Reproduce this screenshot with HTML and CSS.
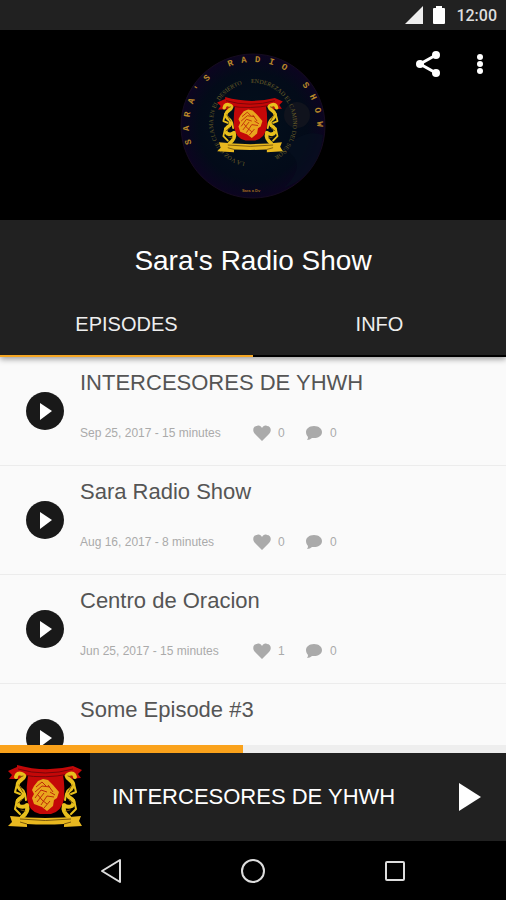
FILE: index.html
```html
<!DOCTYPE html>
<html lang="en">
<head>
    <meta charset="UTF-8">
    <meta name="viewport" content="width=device-width, initial-scale=1.0">
    <title>Sara's Radio Show</title>
    <link rel="stylesheet" href="styles.css">
</head>
<body>

    <!-- Shared icons -->
    <svg class="sprite" aria-hidden="true">
        <symbol id="crest" viewBox="0 0 90 80">
            <path fill="#c40808" d="M17 10 L8 14 L12 18 L9 22 L22 22 L28 18 Q26 30 27 42 Q29 55 40 57 L51 57 Q62 54 64 42 Q65 29 63 18 L69 22 L81 21 L78 17 L82 13 L73 9 Q45 16 17 8 Z"/>
            <path fill="none" stroke="#760508" stroke-width="1" d="M18 12 Q45 20 73 12 M22 18 Q45 22 69 17"/>
            <g id="dragon" fill="none" stroke="#e8c01c" stroke-width="4" stroke-linecap="round" stroke-linejoin="round">
                <path d="M16 20 Q17 15 22 17 Q27 19 21 23 Q15 27 20 32 Q26 36 22 40 Q15 44 19 49 Q24 51 27 48 Q29 55 22 60"/>
                <path stroke-width="2" d="M17 27 L15 35 L20 37 M17 43 L15 52 L20 57 M25 37 L26 43"/>
                <path stroke="#79570b" stroke-width="1" d="M20 20 L23 19 M19 28 L23 35 M18 46 L22 43 M21 53 L25 54"/>
            </g>
            <use href="#dragon" transform="matrix(-1 0 0 1 91 0)"/>
            <path fill="#e9a51d" d="M34 29 L38 24 L43 22 L48 23 L53 28 L59 35 L57 41 L54 43 L53 49 L47 54 L42 50 L34 47 L32 41 L34 37 L32 33 Z"/>
            <path fill="none" stroke="#bd2a09" stroke-width="1" d="M36 30 L42 25 L46 29 M35 35 L42 29 L50 30 M35 41 L41 33 L47 35 M37 45 L44 36 M41 48 L47 39 L54 40 M48 28 L53 35 M44 51 L50 44 M38 38 L42 43 L47 47 M50 35 L55 38"/>
            <path fill="#e8b820" d="M10 59 Q45 63 81 59 L79 64 L82 69 L64 70 L64 67 Q45 68 27 67 L27 70 L8 69 L12 65 Z"/>
            <path fill="none" stroke="#79570b" stroke-width="1" d="M20 62 Q45 65 71 62 M27 67 L20 65 M64 67 L71 65"/>
        </symbol>
        <symbol id="play" viewBox="0 0 38 38">
            <circle cx="19" cy="19" r="19" fill="#191919"/>
            <path fill="#fff" d="M14 11 L26 19 L14 28 Z"/>
        </symbol>
        <symbol id="heart" viewBox="0 0 18 16">
            <path fill="#aaa" d="M9 16 L2 9 C-1 6 0 1 4 1 C6 0 8 1 9 3 C10 1 12 0 14 1 C18 1 19 6 16 9 Z"/>
        </symbol>
        <symbol id="comment" viewBox="0 0 18 16">
            <path fill="#aaa" d="M9 1 C14 1 17 4 17 7 C17 11 13 13 9 13 L7 13 Q5 15 2 15 Q3 14 3 12 C2 11 1 9 1 7 C1 4 4 1 9 1 Z"/>
        </symbol>
    </svg>

    <div class="status-bar">
        <svg width="20" height="20" viewBox="0 0 20 20"><path fill="#eee" d="M19 1 V19 H1 Z"/></svg>
        <svg width="12" height="20" viewBox="0 0 12 20"><path fill="#fff" d="M3 1 H9 V3 H11 Q12 3 12 4 V18 Q12 19 11 19 H1 Q0 19 0 18 V4 Q0 3 1 3 H3 Z"/></svg>
        <span class="clock">12:00</span>
    </div>

    <header class="banner">
        <svg class="logo" viewBox="0 0 146 146" role="img" aria-label="Show logo">
            <defs>
                <radialGradient id="disc">
                    <stop offset="0" stop-color="#03101c"/>
                    <stop offset="0.75" stop-color="#030b19"/>
                    <stop offset="1" stop-color="#0c0420"/>
                </radialGradient>
                <path id="outer-ring" d="M73 137 A64 64 0 0 1 73 9 A64 64 0 0 1 73 137"/>
                <path id="inner-ring" d="M73 110 A40 40 0 0 1 73 30 A40 40 0 0 1 73 110"/>
            </defs>
            <circle cx="73" cy="73" r="72" fill="url(#disc)" stroke="#160c20" stroke-width="1"/>
            <circle cx="117" cy="62" r="13" fill="#10131d"/>
            <path fill="#071120" opacity="0.6" d="M104 96 Q124 75 143 82 Q139 122 104 135 Q130 110 104 96 Z"/>
            <text class="ring-title"><textPath href="#outer-ring" startOffset="82"><tspan dx="0 8 8 8 8 8 8 8 8 8 8 8 8 8 8 8 8">SARA'S RADIO SHOW</tspan></textPath></text>
            <text class="ring-motto"><textPath href="#inner-ring" startOffset="8">LA VOZ QUE CLAMA EN EL DESIERTO<tspan dx="9">ENDEREZAD EL CAMINO DEL SEÑOR</tspan></textPath></text>
            <use href="#crest" x="30" y="37" width="80" height="71"/>
            <text class="logo-note" x="71" y="139">Sara a Dv</text>
        </svg>
        <div class="actions">
            <button class="icon-button" type="button" aria-label="Share">
                <svg width="26" height="28" viewBox="0 0 26 28">
                    <path fill="none" stroke="#fff" stroke-width="3" d="M21 5 L5 14 L21 23"/>
                    <circle cx="21" cy="5" r="4" fill="#fff"/>
                    <circle cx="5" cy="14" r="4" fill="#fff"/>
                    <circle cx="21" cy="23" r="4" fill="#fff"/>
                </svg>
            </button>
            <button class="icon-button" type="button" aria-label="More options">
                <svg width="8" height="22" viewBox="0 0 8 22">
                    <g fill="#fff"><circle cx="4" cy="4" r="3"/><circle cx="4" cy="11" r="3"/><circle cx="4" cy="18" r="3"/></g>
                </svg>
            </button>
        </div>
    </header>

    <div class="show-header">
        <h1>Sara's Radio Show</h1>
        <nav class="tabs">
            <button class="tab active" type="button">EPISODES</button>
            <button class="tab" type="button">INFO</button>
        </nav>
    </div>

    <main class="episodes">
        <article class="episode">
            <button class="play-button" type="button" aria-label="Play"><svg width="38" height="38"><use href="#play"/></svg></button>
            <div class="details">
                <h2>INTERCESORES DE YHWH</h2>
                <div class="meta">
                    <span class="date">Sep 25, 2017 - 15 minutes</span>
                    <span class="count"><svg width="18" height="16"><use href="#heart"/></svg>0</span>
                    <span class="count"><svg width="18" height="16"><use href="#comment"/></svg>0</span>
                </div>
            </div>
        </article>
        <article class="episode">
            <button class="play-button" type="button" aria-label="Play"><svg width="38" height="38"><use href="#play"/></svg></button>
            <div class="details">
                <h2>Sara Radio Show</h2>
                <div class="meta">
                    <span class="date">Aug 16, 2017 - 8 minutes</span>
                    <span class="count"><svg width="18" height="16"><use href="#heart"/></svg>0</span>
                    <span class="count"><svg width="18" height="16"><use href="#comment"/></svg>0</span>
                </div>
            </div>
        </article>
        <article class="episode">
            <button class="play-button" type="button" aria-label="Play"><svg width="38" height="38"><use href="#play"/></svg></button>
            <div class="details">
                <h2>Centro de Oracion</h2>
                <div class="meta">
                    <span class="date">Jun 25, 2017 - 15 minutes</span>
                    <span class="count"><svg width="18" height="16"><use href="#heart"/></svg>1</span>
                    <span class="count"><svg width="18" height="16"><use href="#comment"/></svg>0</span>
                </div>
            </div>
        </article>
        <article class="episode">
            <button class="play-button" type="button" aria-label="Play"><svg width="38" height="38"><use href="#play"/></svg></button>
            <div class="details">
                <h2>Some Episode #3</h2>
            </div>
        </article>
    </main>

    <!-- Now playing -->
    <div class="progress"><div class="progress-fill" style="width: 48%"></div></div>
    <footer class="player">
        <div class="cover"><svg width="90" height="80"><use href="#crest"/></svg></div>
        <span class="track">INTERCESORES DE YHWH</span>
        <button class="icon-button" type="button" aria-label="Play">
            <svg width="24" height="28" viewBox="0 0 24 28"><path fill="#fff" d="M1 0 L23 14 L1 28 Z"/></svg>
        </button>
    </footer>

    <nav class="system-nav">
        <button class="icon-button" type="button" aria-label="Back">
            <svg width="24" height="26" viewBox="0 0 24 26"><path fill="none" stroke="#ddd" stroke-width="2" stroke-linejoin="round" d="M21 2 V24 L3 13 Z"/></svg>
        </button>
        <button class="icon-button" type="button" aria-label="Home">
            <svg width="24" height="26" viewBox="0 0 24 26"><circle cx="12" cy="13" r="11" fill="none" stroke="#ddd" stroke-width="2"/></svg>
        </button>
        <button class="icon-button" type="button" aria-label="Recent apps">
            <svg width="24" height="26" viewBox="0 0 24 26"><rect x="3" y="4" width="18" height="18" rx="1" fill="none" stroke="#ddd" stroke-width="2"/></svg>
        </button>
    </nav>

</body>
</html>
```
FILE: styles.css
```css
* {
    box-sizing: border-box;
}

body {
    margin: 0;
    height: 100vh;
    display: flex;
    flex-direction: column;
    overflow: hidden;
    background-color: #000;
    color: #fff;
    font-family: "Liberation Sans", Arial, sans-serif;
}

h1, h2 {
    margin: 0;
    font-weight: normal;
}

button {
    padding: 0;
    border: none;
    background: none;
    color: inherit;
    font-family: inherit;
    cursor: pointer;
}

svg {
    display: block;
    flex-shrink: 0;
}

.sprite {
    position: absolute;
    width: 0;
    height: 0;
}

.icon-button {
    display: flex;
    align-items: center;
    justify-content: center;
}

/* Status bar */
.status-bar {
    display: flex;
    align-items: center;
    justify-content: flex-end;
    gap: 9px;
    height: 30px;
    flex-shrink: 0;
    padding-right: 9px;
    background-color: #212121;
}

.clock {
    margin-left: 2px;
    font-family: Roboto, sans-serif;
    font-size: 16px;
    font-weight: 500;
    color: #ddd;
}

/* Banner with the show logo */
.banner {
    position: relative;
    display: flex;
    justify-content: center;
    padding: 23px 0 21px;
    flex-shrink: 0;
}

.logo {
    width: 146px;
    height: 146px;
}

.ring-title {
    fill: #b8862a;
    font: bold 9px "Liberation Mono", monospace;
}

.ring-motto {
    fill: #6f6228;
    font: 6px "Liberation Serif", serif;
}

.logo-note {
    fill: #a06a20;
    font: bold 4px "Liberation Sans", sans-serif;
    text-anchor: middle;
}

.actions {
    position: absolute;
    top: 16px;
    right: 22px;
    display: flex;
    align-items: center;
    gap: 35px;
    height: 36px;
}

/* Title and tabs */
.show-header {
    position: relative;
    flex-shrink: 0;
    background-color: #212121;
    box-shadow: 0 2px 6px rgba(0, 0, 0, 0.4);
}

h1 {
    padding: 24px 0 16px;
    font-size: 28px;
    line-height: 34px;
    text-align: center;
}

.tabs {
    display: flex;
}

.tab {
    flex: 1;
    height: 63px;
    border-bottom: 2px solid #000;
    font-size: 20px;
    color: #eee;
}

.tab.active {
    border-bottom-color: #f5a623;
}

/* Episode list */
.episodes {
    flex: 1;
    min-height: 0;
    overflow: hidden;
    background-color: #fafafa;
}

.episode {
    display: flex;
    align-items: center;
    gap: 16px;
    height: 109px;
    padding-left: 26px;
    border-bottom: 1px solid #ececec;
}

.details {
    display: flex;
    flex-direction: column;
    gap: 26px;
    height: 84px;
}

h2 {
    font-size: 22px;
    line-height: 28px;
    color: #555;
}

.meta {
    display: flex;
    align-items: center;
    font-size: 12px;
    line-height: 20px;
    color: #aaa;
}

.date {
    width: 173px;
}

.count {
    display: flex;
    align-items: center;
    gap: 7px;
    width: 52px;
}

/* Player */
.progress {
    flex-shrink: 0;
    height: 8px;
    background-color: #eee;
}

.progress-fill {
    height: 100%;
    background-color: #faa21b;
}

.player {
    display: flex;
    align-items: center;
    flex-shrink: 0;
    height: 88px;
    padding-right: 24px;
    background-color: #212121;
}

.cover {
    display: flex;
    align-items: center;
    width: 90px;
    height: 100%;
    background-color: #000;
}

.track {
    flex: 1;
    padding-left: 22px;
    font-size: 22px;
}

/* System navigation */
.system-nav {
    display: flex;
    justify-content: center;
    gap: 118px;
    flex-shrink: 0;
    height: 59px;
}
```
